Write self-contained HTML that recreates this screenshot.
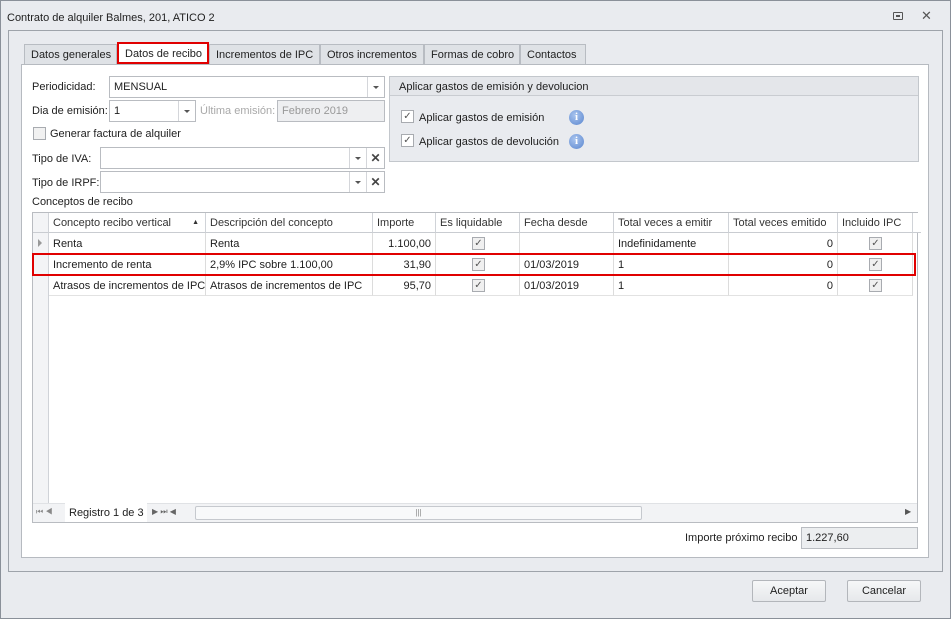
<!DOCTYPE html>
<html><head><meta charset="utf-8"><style>
*{box-sizing:border-box;margin:0;padding:0;white-space:nowrap}
body{width:951px;height:619px;position:relative;overflow:hidden;background:#e9ebef;font-family:"Liberation Sans",sans-serif;font-size:11px;color:#1e1e1e}
.a{position:absolute}
.win{left:0;top:0;width:951px;height:619px;border:1px solid #8a9099}
.inp{position:absolute;background:#fff;border:1px solid #b9bcc1;height:22px;line-height:21px;padding-left:4px;overflow:hidden}
.dd{position:absolute;top:0;right:0;width:17px;height:20px;border-left:1px solid #d4d6da;background:#fff}
.dd:after{content:"";position:absolute;left:5px;top:9px;border-left:3px solid transparent;border-right:3px solid transparent;border-top:3px solid #555}
.x{position:absolute;top:0;right:0;width:18px;height:20px;border-left:1px solid #d4d6da;text-align:center;font-weight:bold;color:#444;font-size:12px;line-height:20px}
.cb{position:absolute;width:13px;height:13px;border:1px solid #a8abb0;background:#fff;font-size:10px;line-height:11px;text-align:center;color:#555}
.tab{position:absolute;top:44px;height:20px;border:1px solid #b8bcc2;border-bottom:none;background:#dfe2e6;line-height:20px;padding:0 6px;color:#222}
.cell{position:absolute;height:21px;line-height:22px;padding:0 4px;border-right:1px solid #dcdcdc;border-bottom:1px solid #e2e2e2;overflow:hidden}
.hd{position:absolute;height:20px;line-height:20px;padding:0 4px;border-right:1px solid #d0d3d8;background:#fff;border-bottom:1px solid #c9ccd1;color:#333;overflow:hidden}
.r{text-align:right}
.info{position:absolute;width:15px;height:15px;border-radius:50%;background:radial-gradient(circle at 40% 35%,#a9c4ee,#5a86cf);color:#fff;font-weight:bold;font-size:11px;text-align:center;line-height:15px;font-family:"Liberation Serif",serif}
.btn{position:absolute;top:580px;width:74px;height:22px;border:1px solid #b3b6bb;background:linear-gradient(#f6f7f8,#e6e8eb);text-align:center;line-height:21px;border-radius:2px}
</style></head><body>
<div class="a win"></div>
<div class="a" style="left:7px;top:12px">Contrato de alquiler Balmes, 201, ATICO 2</div>
<div class="a" style="left:893px;top:12px;width:10px;height:8px;border:1px solid #555;border-radius:1px"></div>
<div class="a" style="left:896px;top:15px;width:4px;height:2px;background:#555"></div>
<div class="a" style="left:921px;top:8px;font-size:13px;color:#555">✕</div>
<div class="a" style="left:8px;top:30px;width:935px;height:542px;border:1px solid #9ea3aa;background:#e9ebef"></div>
<div class="tab" style="left:24px;width:93px">Datos generales</div>
<div class="tab" style="left:117px;width:92px;top:42px;height:22px;background:#fff;border:2px solid #e00000;line-height:20px">Datos de recibo</div>
<div class="tab" style="left:209px;width:111px">Incrementos de IPC</div>
<div class="tab" style="left:320px;width:104px">Otros incrementos</div>
<div class="tab" style="left:424px;width:96px">Formas de cobro</div>
<div class="tab" style="left:520px;width:66px">Contactos</div>
<div class="a" style="left:21px;top:64px;width:908px;height:494px;background:#fff;border:1px solid #b6bac0"></div>
<div class="a" style="left:32px;top:81px">Periodicidad:</div>
<div class="inp" style="left:109px;top:76px;width:276px">MENSUAL<div class="dd"></div></div>
<div class="a" style="left:32px;top:105px">Dia de emisión:</div>
<div class="inp" style="left:109px;top:100px;width:87px">1<div class="dd"></div></div>
<div class="a" style="left:200px;top:105px;color:#a9a9a9">Última emisión:</div>
<div class="inp" style="left:277px;top:100px;width:108px;background:#eeeff1;color:#999">Febrero 2019</div>
<div class="cb" style="left:33px;top:127px;background:#f1f1f1"></div>
<div class="a" style="left:50px;top:128px">Generar factura de alquiler</div>
<div class="a" style="left:32px;top:153px">Tipo de IVA:</div>
<div class="inp" style="left:100px;top:147px;width:285px"><div class="dd" style="right:18px"></div><div class="x">✕</div></div>
<div class="a" style="left:32px;top:177px">Tipo de IRPF:</div>
<div class="inp" style="left:100px;top:171px;width:285px"><div class="dd" style="right:18px"></div><div class="x">✕</div></div>
<div class="a" style="left:389px;top:76px;width:530px;height:86px;border:1px solid #c3c7cc;background:#e9ebef"></div>
<div class="a" style="left:390px;top:77px;width:528px;height:19px;border-bottom:1px solid #c9ccd1;background:#e4e6ea"></div>
<div class="a" style="left:399px;top:81px">Aplicar gastos de emisión y devolucion</div>
<div class="cb" style="left:401px;top:110px">✓</div>
<div class="a" style="left:419px;top:112px">Aplicar gastos de emisión</div>
<div class="info" style="left:569px;top:110px">i</div>
<div class="cb" style="left:401px;top:134px">✓</div>
<div class="a" style="left:419px;top:136px">Aplicar gastos de devolución</div>
<div class="info" style="left:569px;top:134px">i</div>
<div class="a" style="left:32px;top:196px">Conceptos de recibo</div>
<div class="a" style="left:32px;top:212px;width:886px;height:311px;border:1px solid #b9bcc1;background:#fff"></div>
<div class="hd" style="left:33px;top:213px;width:16px;background:#f3f4f6"></div>
<div class="hd" style="left:49px;top:213px;width:157px">Concepto recibo vertical<span style="position:absolute;right:6px;font-size:7px">▲</span></div>
<div class="hd" style="left:206px;top:213px;width:167px">Descripción del concepto</div>
<div class="hd" style="left:373px;top:213px;width:63px">Importe</div>
<div class="hd" style="left:436px;top:213px;width:84px">Es liquidable</div>
<div class="hd" style="left:520px;top:213px;width:94px">Fecha desde</div>
<div class="hd" style="left:614px;top:213px;width:115px">Total veces a emitir</div>
<div class="hd" style="left:729px;top:213px;width:109px">Total veces emitido</div>
<div class="hd" style="left:838px;top:213px;width:75px">Incluido IPC</div>
<div class="hd" style="left:913px;top:213px;width:4px;border-right:none"></div>
<div class="a" style="left:33px;top:233px;width:16px;height:270px;background:#f3f4f6;border-right:1px solid #d0d3d8"></div>
<div class="a" style="left:38px;top:239px;border-top:4px solid transparent;border-bottom:4px solid transparent;border-left:4px solid #999"></div>

<div class="cell" style="left:49px;top:233px;width:157px">Renta</div>
<div class="cell" style="left:206px;top:233px;width:167px">Renta</div>
<div class="cell r" style="left:373px;top:233px;width:63px">1.100,00</div>
<div class="cell" style="left:436px;top:233px;width:84px"></div>
<div class="cb" style="left:472px;top:237px;background:#f0f0f0">✓</div>
<div class="cell" style="left:520px;top:233px;width:94px"></div>
<div class="cell" style="left:614px;top:233px;width:115px">Indefinidamente</div>
<div class="cell r" style="left:729px;top:233px;width:109px">0</div>
<div class="cell" style="left:838px;top:233px;width:75px"></div>
<div class="cb" style="left:869px;top:237px;background:#f0f0f0">✓</div>

<div class="cell" style="left:49px;top:254px;width:157px">Incremento de renta</div>
<div class="cell" style="left:206px;top:254px;width:167px">2,9% IPC sobre 1.100,00</div>
<div class="cell r" style="left:373px;top:254px;width:63px">31,90</div>
<div class="cell" style="left:436px;top:254px;width:84px"></div>
<div class="cb" style="left:472px;top:258px;background:#f0f0f0">✓</div>
<div class="cell" style="left:520px;top:254px;width:94px">01/03/2019</div>
<div class="cell" style="left:614px;top:254px;width:115px">1</div>
<div class="cell r" style="left:729px;top:254px;width:109px">0</div>
<div class="cell" style="left:838px;top:254px;width:75px"></div>
<div class="cb" style="left:869px;top:258px;background:#f0f0f0">✓</div>

<div class="cell" style="left:49px;top:275px;width:157px">Atrasos de incrementos de IPC</div>
<div class="cell" style="left:206px;top:275px;width:167px">Atrasos de incrementos de IPC</div>
<div class="cell r" style="left:373px;top:275px;width:63px">95,70</div>
<div class="cell" style="left:436px;top:275px;width:84px"></div>
<div class="cb" style="left:472px;top:279px;background:#f0f0f0">✓</div>
<div class="cell" style="left:520px;top:275px;width:94px">01/03/2019</div>
<div class="cell" style="left:614px;top:275px;width:115px">1</div>
<div class="cell r" style="left:729px;top:275px;width:109px">0</div>
<div class="cell" style="left:838px;top:275px;width:75px"></div>
<div class="cb" style="left:869px;top:279px;background:#f0f0f0">✓</div>
<div class="a" style="left:32px;top:253px;width:884px;height:23px;border:2px solid #e00000"></div>
<div class="a" style="left:33px;top:503px;width:884px;height:19px;background:#f2f3f5;border-top:1px solid #e0e2e5"></div>
<div class="a" style="left:36px;top:507px;font-size:8px;color:#888">⏮ ◀</div>
<div class="a" style="left:65px;top:503px;width:82px;height:19px;background:#fff;line-height:21px;padding-left:4px">Registro 1 de 3</div>
<div class="a" style="left:152px;top:507px;font-size:8px;color:#666">▶ ⏭ ◀</div>
<div class="a" style="left:195px;top:506px;width:447px;height:14px;border:1px solid #c6c9ce;background:#f8f9fa;border-radius:2px;text-align:center;font-size:8px;line-height:12px;color:#888">|||</div>
<div class="a" style="left:905px;top:507px;font-size:8px;color:#555">▶</div>
<div class="a" style="left:685px;top:532px">Importe próximo recibo</div>
<div class="inp" style="left:801px;top:527px;width:117px;background:#eceef0">1.227,60</div>
<div class="btn" style="left:752px">Aceptar</div>
<div class="btn" style="left:847px">Cancelar</div>
</body></html>
